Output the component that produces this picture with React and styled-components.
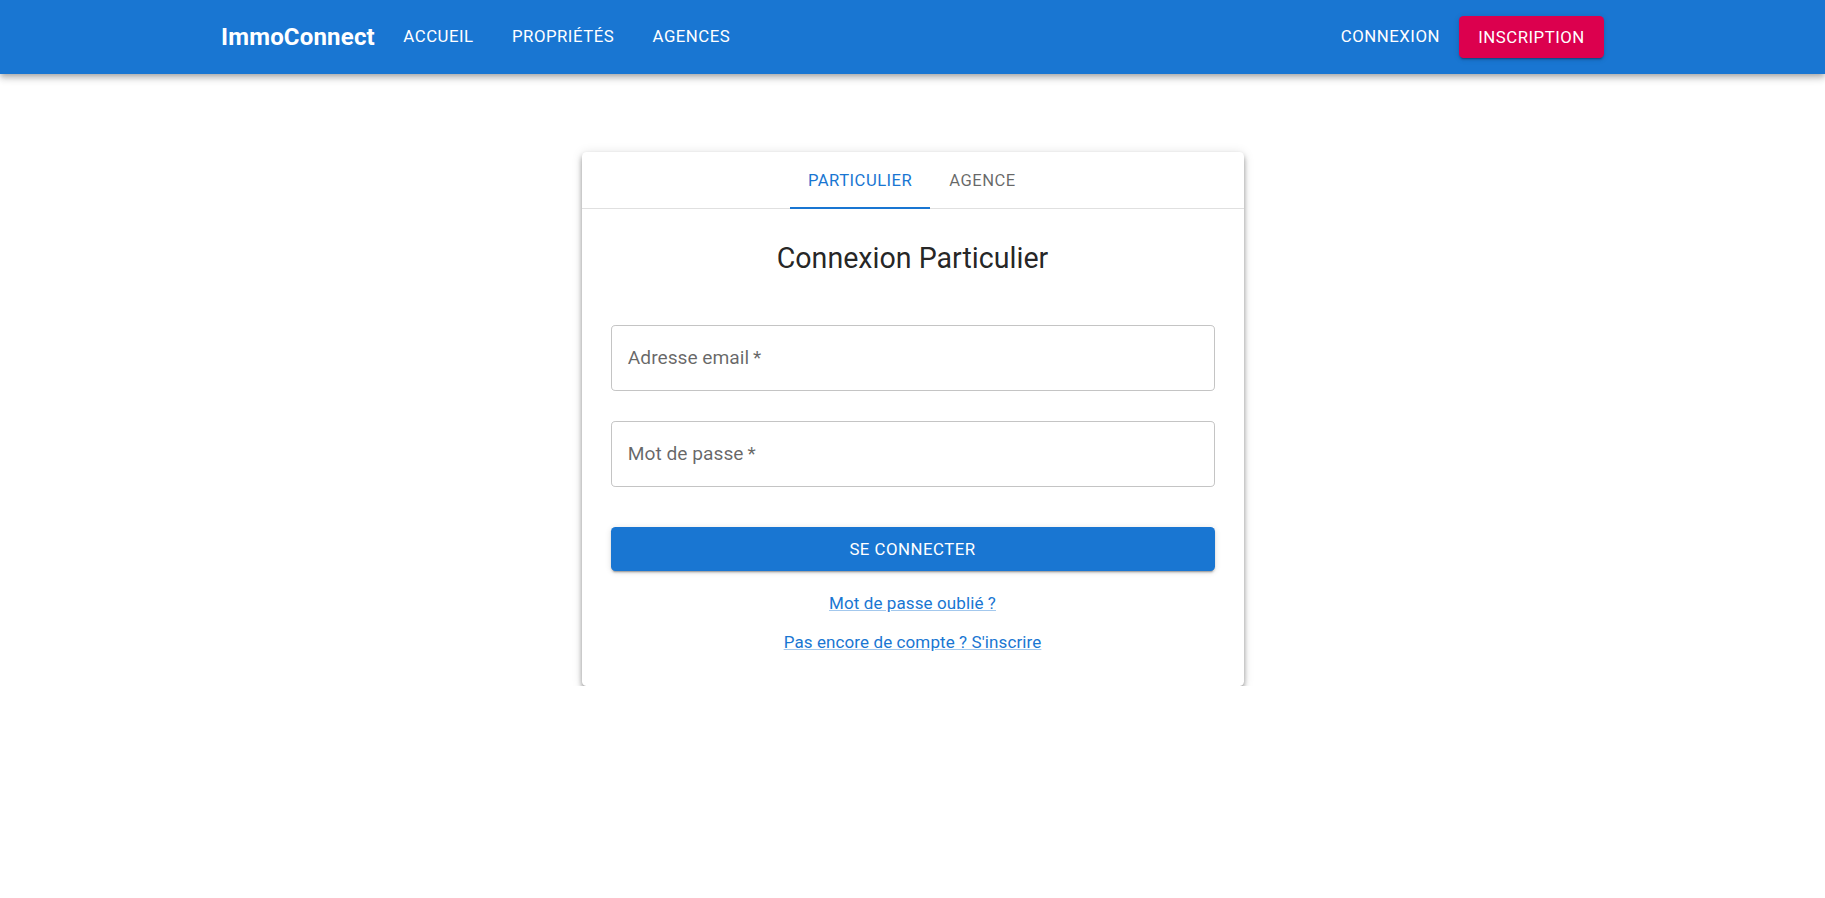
import React from 'react';
import styled, { createGlobalStyle } from 'styled-components';

const GlobalStyle = createGlobalStyle`
  html, body {
    margin: 0;
    padding: 0;
    background: #ffffff;
    font-family: Roboto, "Liberation Sans", Arial, sans-serif;
  }
  * { box-sizing: border-box; }
`;

function App() {
  return (
    <>
      <GlobalStyle />
      <Header>
        <HeaderInner>
          <Brand>ImmoConnect</Brand>
          <NavButton>Accueil</NavButton>
          <NavButton>Propriétés</NavButton>
          <NavButton>Agences</NavButton>
          <Spacer />
          <NavButton>Connexion</NavButton>
          <SignupButton>Inscription</SignupButton>
        </HeaderInner>
      </Header>

      <Main>
        <Card>
          <Tabs>
            <Tab $active>Particulier</Tab>
            <Tab>Agence</Tab>
          </Tabs>
          <CardBody>
            <Title>Connexion Particulier</Title>
            <Field>
              <FieldLabel>Adresse email{'\u2009'}*</FieldLabel>
              <FieldInput type="email" aria-label="Adresse email" />
            </Field>
            <Field $gap>
              <FieldLabel>Mot de passe{'\u2009'}*</FieldLabel>
              <FieldInput type="password" aria-label="Mot de passe" />
            </Field>
            <SubmitButton>Se connecter</SubmitButton>
            <LinkRow $first>
              <TextLink href="#">Mot de passe oublié ?</TextLink>
            </LinkRow>
            <LinkRow>
              <TextLink href="#">Pas encore de compte ? S'inscrire</TextLink>
            </LinkRow>
          </CardBody>
        </Card>
      </Main>
    </>
  );
}

/////////////////////////

const Header = styled.header`
  background-color: #1976d2;
  color: #ffffff;
  box-shadow: 0px 2px 5px -1px rgba(0, 0, 0, 0.2),
    0px 5px 6px 0px rgba(0, 0, 0, 0.14), 0px 1px 12px 0px rgba(0, 0, 0, 0.12);
  position: relative;
  z-index: 2;
`;

const HeaderInner = styled.div`
  max-width: 1383px;
  height: 74px;
  margin: 0 auto;
  display: flex;
  align-items: center;
`;

const Brand = styled.div`
  font-size: 24px;
  font-weight: 700;
  letter-spacing: 0.18px;
  line-height: 1.6;
  margin-right: 9.3px;
`;

const NavButton = styled.button`
  background: transparent;
  border: 0;
  color: #ffffff;
  font-family: inherit;
  font-size: 16.8px;
  font-weight: 400;
  letter-spacing: 0.5px;
  text-transform: uppercase;
  line-height: 1.75;
  padding: 7px 9.6px;
  margin: 0 9.6px;
  border-radius: 4.6px;
  cursor: pointer;
`;

const Spacer = styled.div`
  flex: 1;
`;

const SignupButton = styled.button`
  background-color: #dc004e;
  border: 0;
  color: #ffffff;
  font-family: inherit;
  font-size: 16.8px;
  font-weight: 400;
  letter-spacing: 0.5px;
  text-transform: uppercase;
  height: 42.5px;
  padding: 0 19.2px;
  border-radius: 4.6px;
  box-shadow: 0px 3px 1px -2px rgba(0, 0, 0, 0.2),
    0px 2px 2px 0px rgba(0, 0, 0, 0.14), 0px 1px 6px 0px rgba(0, 0, 0, 0.12);
  cursor: pointer;
`;

const Main = styled.main`
  display: flex;
  justify-content: center;
  padding-top: 78px;
`;

const Card = styled.section`
  width: 662px;
  background: #ffffff;
  border-radius: 4.6px;
  box-shadow: 0px 3px 5px -1px rgba(0, 0, 0, 0.3),
    0px 4px 6px 0px rgba(0, 0, 0, 0.18), 0px 1px 11px 0px rgba(0, 0, 0, 0.13);
`;

const Tabs = styled.nav`
  display: flex;
  justify-content: center;
  border-bottom: 1px solid rgba(0, 0, 0, 0.12);
`;

const Tab = styled.button`
  position: relative;
  height: 56px;
  min-width: 104.8px;
  padding: 0 17.8px;
  background: transparent;
  border: 0;
  font-family: inherit;
  font-size: 16.6px;
  font-weight: 400;
  letter-spacing: 0.5px;
  text-transform: uppercase;
  color: ${(p) => (p.$active ? '#1976d2' : 'rgba(0, 0, 0, 0.6)')};
  cursor: pointer;

  &::after {
    content: '';
    display: ${(p) => (p.$active ? 'block' : 'none')};
    position: absolute;
    left: 0;
    right: 0;
    bottom: -1px;
    height: 2.4px;
    background: #1976d2;
  }
`;

const CardBody = styled.div`
  padding: 31px 29px 31px;
  display: flex;
  flex-direction: column;
`;

const Title = styled.h2`
  margin: 0 0 47.6px;
  font-size: 28.6px;
  font-weight: 400;
  line-height: 37.4px;
  text-align: center;
  color: rgba(0, 0, 0, 0.87);
`;

const Field = styled.label`
  display: flex;
  align-items: center;
  height: 66px;
  padding: 0 16.3px;
  margin-top: ${(p) => (p.$gap ? '30px' : '0')};
  border: 1px solid rgba(0, 0, 0, 0.23);
  border-radius: 4.6px;
  cursor: text;
`;

const FieldLabel = styled.span`
  font-size: 19.2px;
  line-height: 1.4375;
  color: rgba(0, 0, 0, 0.6);
  white-space: nowrap;
`;

const FieldInput = styled.input`
  flex: 1;
  min-width: 0;
  border: 0;
  outline: none;
  background: transparent;
  font-family: inherit;
  font-size: 19.2px;
`;

const SubmitButton = styled.button`
  margin-top: 39.7px;
  height: 44px;
  background-color: #1976d2;
  color: #ffffff;
  border: 0;
  border-radius: 4.6px;
  font-family: inherit;
  font-size: 16.8px;
  font-weight: 400;
  letter-spacing: 0.5px;
  text-transform: uppercase;
  box-shadow: 0px 3px 1px -2px rgba(0, 0, 0, 0.2),
    0px 2px 2px 0px rgba(0, 0, 0, 0.14), 0px 1px 6px 0px rgba(0, 0, 0, 0.12);
  cursor: pointer;
`;

const LinkRow = styled.div`
  text-align: center;
  line-height: 25.5px;
  margin-top: ${(p) => (p.$first ? '20.7px' : '12.8px')};
`;

const TextLink = styled.a`
  font-size: 17px;
  color: #1976d2;
  text-decoration: underline;
  text-decoration-color: rgba(25, 118, 210, 0.4);
  letter-spacing: 0.1px;
`;

/////////////////////////

export default App;
